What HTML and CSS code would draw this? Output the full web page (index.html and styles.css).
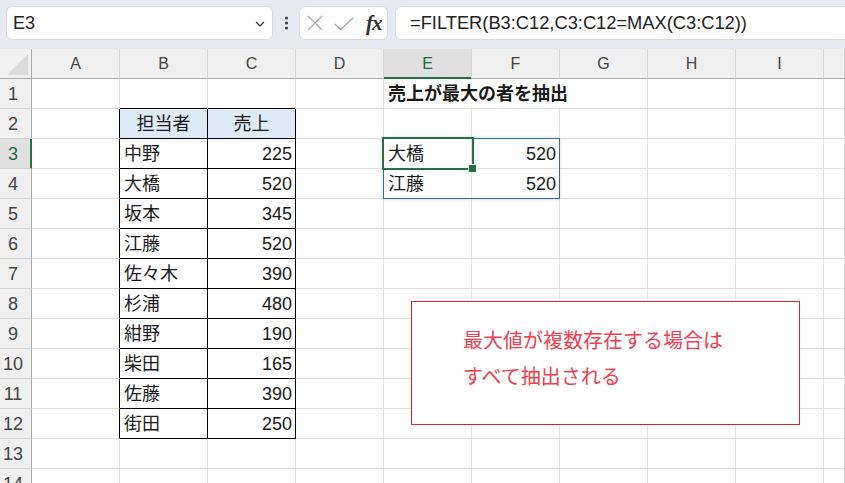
FILE: index.html
```html
<!DOCTYPE html>
<html>
    <head>
        <meta charset="UTF-8">
        <title>FILTER - 最大値の抽出</title>
        <link rel="stylesheet" href="styles.css">
    </head>
    <body>
        <!-- formula bar -->
        <div class="toolbar">
            <div class="namebox">
                <span>E3</span>
                <svg class="chev" width="10" height="6" viewBox="0 0 10 6"><path d="M1 1 L5 5 L9 1" fill="none" stroke="#333" stroke-width="1.2"/></svg>
            </div>
            <div class="grip">
                <svg width="5" height="14" viewBox="0 0 5 14"><circle cx="2.5" cy="2" r="1.6" fill="#444"/><circle cx="2.5" cy="7" r="1.6" fill="#444"/><circle cx="2.5" cy="12" r="1.6" fill="#444"/></svg>
            </div>
            <div class="fxbox">
                <svg width="16" height="16" viewBox="0 0 16 16"><path d="M1 1 L15 15 M15 1 L1 15" stroke="#a8a8a8" stroke-width="1.3"/></svg>
                <svg class="ok" width="20" height="14" viewBox="0 0 20 14"><path d="M1 7 L6.5 12.5 L19 1" fill="none" stroke="#a8a8a8" stroke-width="1.3"/></svg>
                <span class="fx">fx</span>
            </div>
            <div class="formula">=FILTER(B3:C12,C3:C12=MAX(C3:C12))</div>
        </div>

        <!-- sheet -->
        <div class="sheet">
            <div class="grid">
                <div class="corner"></div>
                <div class="h">A</div><div class="h">B</div><div class="h">C</div><div class="h">D</div>
                <div class="h hsel">E</div><div class="h">F</div><div class="h">G</div><div class="h">H</div><div class="h">I</div><div class="h"></div>

                <div class="r">1</div><div class="c"></div><div class="c tt"></div><div class="c tt"></div><div class="c"></div>
                <div class="c title">売上が最大の者を抽出</div><div class="c nr"></div><div class="c"></div><div class="c"></div><div class="c"></div><div class="c"></div>

                <div class="r">2</div><div class="c tl"></div><div class="c t th">担当者</div><div class="c t th">売上</div><div class="c"></div>
                <div class="c"></div><div class="c"></div><div class="c"></div><div class="c"></div><div class="c"></div><div class="c"></div>

                <div class="r rsel">3</div><div class="c tl"></div><div class="c t">中野</div><div class="c t n">225</div><div class="c"></div>
                <div class="c">大橋</div><div class="c n">520</div><div class="c"></div><div class="c"></div><div class="c"></div><div class="c"></div>

                <div class="r">4</div><div class="c tl"></div><div class="c t">大橋</div><div class="c t n">520</div><div class="c"></div>
                <div class="c">江藤</div><div class="c n">520</div><div class="c"></div><div class="c"></div><div class="c"></div><div class="c"></div>

                <div class="r">5</div><div class="c tl"></div><div class="c t">坂本</div><div class="c t n">345</div><div class="c"></div>
                <div class="c"></div><div class="c"></div><div class="c"></div><div class="c"></div><div class="c"></div><div class="c"></div>

                <div class="r">6</div><div class="c tl"></div><div class="c t">江藤</div><div class="c t n">520</div><div class="c"></div>
                <div class="c"></div><div class="c"></div><div class="c"></div><div class="c"></div><div class="c"></div><div class="c"></div>

                <div class="r">7</div><div class="c tl"></div><div class="c t">佐々木</div><div class="c t n">390</div><div class="c"></div>
                <div class="c"></div><div class="c"></div><div class="c"></div><div class="c"></div><div class="c"></div><div class="c"></div>

                <div class="r">8</div><div class="c tl"></div><div class="c t">杉浦</div><div class="c t n">480</div><div class="c"></div>
                <div class="c"></div><div class="c"></div><div class="c"></div><div class="c"></div><div class="c"></div><div class="c"></div>

                <div class="r">9</div><div class="c tl"></div><div class="c t">紺野</div><div class="c t n">190</div><div class="c"></div>
                <div class="c"></div><div class="c"></div><div class="c"></div><div class="c"></div><div class="c"></div><div class="c"></div>

                <div class="r">10</div><div class="c tl"></div><div class="c t">柴田</div><div class="c t n">165</div><div class="c"></div>
                <div class="c"></div><div class="c"></div><div class="c"></div><div class="c"></div><div class="c"></div><div class="c"></div>

                <div class="r">11</div><div class="c tl"></div><div class="c t">佐藤</div><div class="c t n">390</div><div class="c"></div>
                <div class="c"></div><div class="c"></div><div class="c"></div><div class="c"></div><div class="c"></div><div class="c"></div>

                <div class="r">12</div><div class="c tl"></div><div class="c t">街田</div><div class="c t n">250</div><div class="c"></div>
                <div class="c"></div><div class="c"></div><div class="c"></div><div class="c"></div><div class="c"></div><div class="c"></div>

                <div class="r">13</div><div class="c"></div><div class="c"></div><div class="c"></div><div class="c"></div>
                <div class="c"></div><div class="c"></div><div class="c"></div><div class="c"></div><div class="c"></div><div class="c"></div>

                <div class="r">14</div><div class="c"></div><div class="c"></div><div class="c"></div><div class="c"></div>
                <div class="c"></div><div class="c"></div><div class="c"></div><div class="c"></div><div class="c"></div><div class="c"></div>
            </div>

            <!-- spill range + active cell -->
            <div class="spill"></div>
            <div class="active"></div>

            <!-- text box shape -->
            <div class="note">
                最大値が複数存在する場合は<br>
                すべて抽出される
            </div>
        </div>
    </body>
</html>
```

FILE: styles.css
```css
* {
    box-sizing: border-box;
}

body {
    margin: 0;
    background-color: #fff;
    font-family: "Liberation Sans", "Noto Sans CJK JP", sans-serif;
    color: #1a1a1a;
    overflow: hidden;
}

/* formula bar */
.toolbar {
    height: 49px;
    background-color: #e6e9ef;
    display: flex;
    align-items: flex-start;
    padding: 6px 0 0 6px;
}

.namebox {
    width: 267px;
    height: 34px;
    background-color: #fff;
    border: 1px solid #d9dbe0;
    border-radius: 6px;
    display: flex;
    align-items: center;
    justify-content: space-between;
    padding: 0 7px 0 6px;
    font-size: 18px;
    color: #222;
}

.chev {
    margin-top: 2px;
}

.grip {
    width: 26px;
    height: 34px;
    display: flex;
    align-items: center;
    justify-content: center;
    padding-left: 1px;
}

.fxbox {
    width: 89px;
    height: 34px;
    background-color: #fff;
    border: 1px solid #d9dbe0;
    border-radius: 6px;
    display: flex;
    align-items: center;
    padding-left: 7px;
}

.fxbox .ok {
    margin-left: 11px;
    margin-top: 1px;
}

.fx {
    margin-left: 12px;
    font-family: "Liberation Serif", serif;
    font-style: italic;
    font-weight: bold;
    font-size: 21px;
    color: #333;
    letter-spacing: -1px;
}

.formula {
    flex: 1;
    height: 34px;
    margin-left: 7px;
    margin-right: -10px;
    background-color: #fff;
    border: 1px solid #d9dbe0;
    border-radius: 6px;
    padding-left: 14px;
    line-height: 32px;
    font-size: 18.3px;
    color: #222;
    white-space: nowrap;
}

/* sheet */
.sheet {
    position: relative;
}

.grid {
    display: grid;
    grid-template-columns: 32px repeat(9, 88px) 1fr;
    grid-auto-rows: 30px;
}

.grid > div {
    border-right: 1px solid #e1e1e1;
    border-bottom: 1px solid #e1e1e1;
    white-space: nowrap;
}

.corner {
    background-color: #f0f0f0;
    position: relative;
    border-right-color: #ababab !important;
    border-bottom-color: #ababab !important;
}

.corner::after {
    content: "";
    position: absolute;
    right: 3px;
    bottom: 3px;
    width: 21px;
    height: 21px;
    background-color: #dadada;
    clip-path: polygon(100% 0, 100% 100%, 0 100%);
}

.grid > .h {
    background-color: #f0f0f0;
    border-right-color: #d6d6d6;
    border-bottom-color: #ababab;
    text-align: center;
    font-size: 16px;
    line-height: 30px;
    color: #444;
}

.grid > .hsel {
    background-color: #e0e0e0;
    color: #1e6b41;
    border-bottom-color: #217346;
    box-shadow: inset 0 -1px 0 #217346;
}

.grid > .r {
    background-color: #f0f0f0;
    border-right-color: #ababab;
    border-bottom-color: #d6d6d6;
    text-align: center;
    padding-right: 5px;
    font-size: 18px;
    line-height: 30px;
    color: #444;
}

.grid > .rsel {
    background-color: #e0e0e0;
    color: #1e6b41;
    border-right-color: #217346;
    box-shadow: inset -1px 0 0 #217346;
}

.c {
    padding: 1px 4px 0 4px;
    font-size: 18px;
    line-height: 28px;
}

.n {
    text-align: right;
    padding-right: 3px;
}

/* table B2:C12 */
.grid > .t {
    border-right-color: #000;
    border-bottom-color: #000;
}

.grid > .tl {
    border-right-color: #000;
}

.grid > .tt {
    border-bottom-color: #000;
}

.th {
    background-color: #ddebf7;
    text-align: center;
}

/* E1 text runs over F1 and G1 */
.title {
    font-weight: bold;
    overflow: visible;
}

.grid > .title,
.grid > .nr {
    border-right-color: transparent;
}

.spill {
    position: absolute;
    left: 383px;
    top: 89px;
    width: 177px;
    height: 61px;
    border: 1px solid #3167c4;
    box-shadow: 0 0 4px rgba(0, 0, 0, 0.15);
}

.active {
    position: absolute;
    left: 382px;
    top: 88px;
    width: 92px;
    height: 33px;
    border: 2px solid #217346;
}

.active::after {
    content: "";
    position: absolute;
    right: -5px;
    bottom: -5px;
    width: 7px;
    height: 7px;
    background-color: #217346;
    border: 1px solid #fff;
}

/* text box */
.note {
    position: absolute;
    left: 411px;
    top: 252px;
    width: 389px;
    height: 124px;
    background-color: #fff;
    border: 1px solid #e5202e;
    padding: 20px 0 0 51px;
    font-family: "Noto Sans CJK JP", sans-serif;
    font-size: 20px;
    line-height: 36px;
    color: #f0404f;
}
```
